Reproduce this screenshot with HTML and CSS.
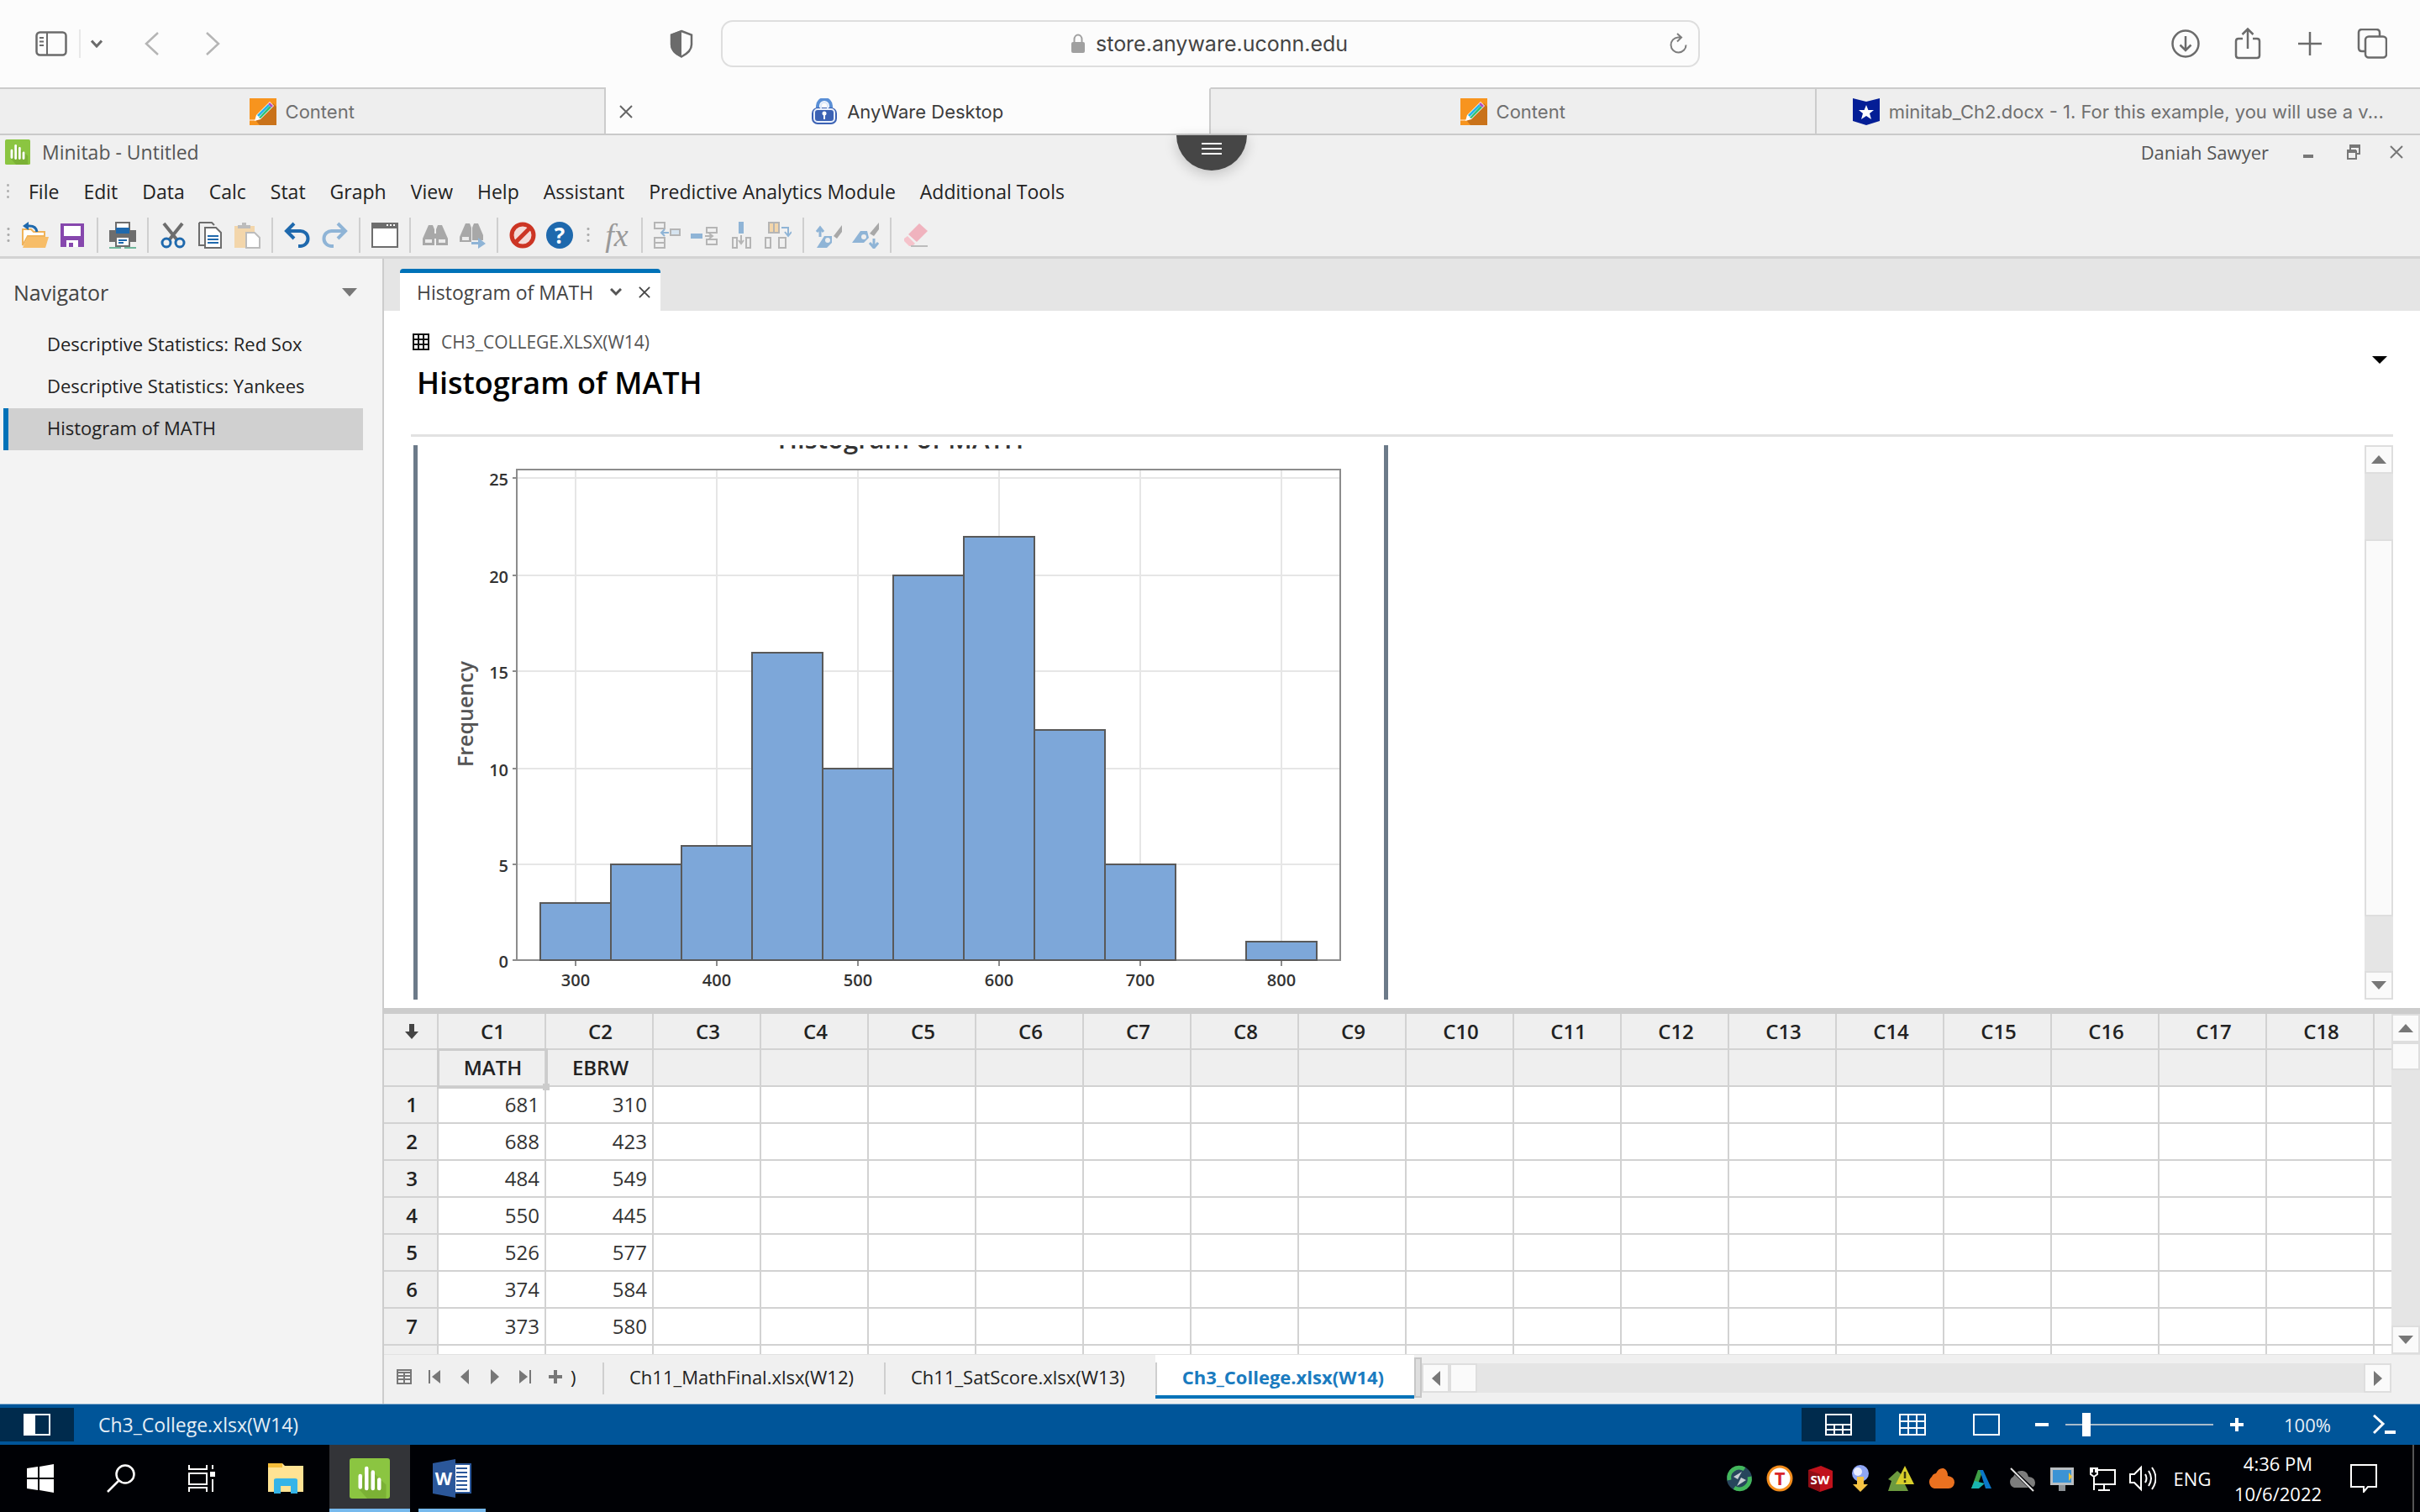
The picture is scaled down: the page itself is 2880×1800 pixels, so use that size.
FILE: index.html
```html
<!DOCTYPE html>
<html lang="en">
<head>
    <meta charset="UTF-8">
    <meta name="viewport" content="width=device-width, initial-scale=1.0">
    <title>AnyWare Desktop</title>
    <link rel="stylesheet" href="styles.css">
</head>
<body>

    <!-- Shared symbols -->
    <svg class="symbols" aria-hidden="true">
        <symbol id="pencil" viewBox="0 0 32 32">
            <rect width="32" height="32" fill="#f7941e"/>
            <path d="M28 6 32 10V32H12L7 26Z" fill="#c9721a"/>
            <path d="M0 26h7" stroke="#ffc27a" stroke-width="2"/>
            <path d="M6 27 8 20 24 4l5 5L13 25Z" fill="#fff"/>
            <path d="M9 20 22 7l2 2L11 22Z" fill="#25b5e8"/>
            <path d="M11 23 24 9l2 2L13 24Z" fill="#2fbf71"/>
            <path d="M22 7l2-2 4 4-2 2Z" fill="#b04ec2"/>
        </symbol>
        <symbol id="minitab" viewBox="0 0 32 32">
            <rect width="32" height="32" rx="2" fill="#8bc541"/>
            <path d="M14 7l15 14v11H14L7 24Z" fill="#7bb135"/>
            <path d="M8.500 14v9M13.500 8v16M18.500 11v13M23.500 17v7" stroke="#fff" stroke-width="3" stroke-linecap="round"/>
        </symbol>
        <symbol id="tri-up" viewBox="0 0 18 10"><path d="M0 10 9 0l9 10Z" fill="#777"/></symbol>
        <symbol id="tri-down" viewBox="0 0 18 10"><path d="M0 0h18L9 10Z" fill="#777"/></symbol>
        <symbol id="tri-left" viewBox="0 0 10 18"><path d="M10 0v18L0 9Z" fill="#777"/></symbol>
        <symbol id="tri-right" viewBox="0 0 10 18"><path d="M0 0v18l10-9Z" fill="#777"/></symbol>
        <symbol id="cross" viewBox="0 0 16 16"><path d="M1 1l14 14M15 1 1 15" stroke="currentColor" stroke-width="2"/></symbol>
    </svg>

    <!-- Browser toolbar -->
    <header class="browser-bar">
        <div class="bar-side">
            <button class="sidebar-btn" aria-label="Sidebar">
                <svg width="38" height="30" viewBox="0 0 38 30" fill="none" stroke="#6b6b6b" stroke-width="2.500"><rect x="1.500" y="1.500" width="35" height="27" rx="4"/><path d="M14 1v28M5 8h5M5 12.500h5M5 17h5" stroke-width="2"/></svg>
            </button>
            <button class="chevron-btn" aria-label="Tab groups">
                <svg width="14" height="10" viewBox="0 0 14 10" fill="none" stroke="#6b6b6b" stroke-width="3"><path d="M1 1.500 7 8l6-6.500"/></svg>
            </button>
            <button class="history-btn" aria-label="Back">
                <svg width="18" height="28" viewBox="0 0 18 28" fill="none" stroke="#b5b5b5" stroke-width="2.500"><path d="M16 1 2 14l14 13"/></svg>
            </button>
            <button class="history-btn" aria-label="Forward">
                <svg width="18" height="28" viewBox="0 0 18 28" fill="none" stroke="#b5b5b5" stroke-width="2.500"><path d="M2 1l14 13L2 27"/></svg>
            </button>
            <button class="shield-btn" aria-label="Privacy report">
                <svg width="28" height="34" viewBox="0 0 28 34"><path d="M14 2 26 6.500V18c0 7-5 11-12 14.500C7 29 2 25 2 18V6.500Z" fill="none" stroke="#6b6b6b" stroke-width="2.500"/><path d="M14 1 1 6v12c0 7 5 12 13 15.500Z" fill="#6b6b6b"/></svg>
            </button>
        </div>
        <form class="address">
            <svg width="18" height="24" viewBox="0 0 18 24"><path d="M4.500 11V7a4.500 5.500 0 0 1 9 0v4" fill="none" stroke="#a0a0a0" stroke-width="2"/><rect x="1" y="10" width="16" height="13" rx="2" fill="#a0a0a0"/></svg>
            <input class="address-input" type="text" aria-label="Address" value="store.anyware.uconn.edu">
            <button class="reload" type="button" aria-label="Reload">
                <svg width="24" height="26" viewBox="0 0 24 26" fill="none" stroke="#7d7d7d" stroke-width="2"><path d="M15 5.500H12a9 9 0 1 0 9.500 9M11 1l5 4.500-5 5"/></svg>
            </button>
        </form>
        <div class="bar-side bar-right">
            <button aria-label="Downloads">
                <svg width="36" height="36" viewBox="0 0 36 36" fill="none" stroke="#6b6b6b" stroke-width="2.500"><circle cx="18" cy="18" r="15.500"/><path d="M18 9v17M11.500 19.500 18 26l6.500-6.500"/></svg>
            </button>
            <button aria-label="Share">
                <svg width="36" height="40" viewBox="0 0 36 40" fill="none" stroke="#6b6b6b" stroke-width="2.500"><path d="M12 14H7q-3 0-3 3v17q0 3 3 3h22q3 0 3-3V17q0-3-3-3h-5M18 26V3M11.500 9 18 2.500 24.500 9"/></svg>
            </button>
            <button aria-label="New tab">
                <svg width="36" height="28" viewBox="0 0 36 28" stroke="#6b6b6b" stroke-width="2.500"><path d="M4 14h28M18 0v28"/></svg>
            </button>
            <button aria-label="Show all tabs">
                <svg width="36" height="36" viewBox="0 0 36 36" fill="none" stroke="#6b6b6b" stroke-width="2.500"><rect x="10" y="9.500" width="25" height="25" rx="4"/><path d="M10 27H6q-4 0-4-4V5q0-4 4-4h17q4 0 4 4v4"/></svg>
            </button>
        </div>
    </header>

    <!-- Browser tabs -->
    <nav class="browser-tabs">
        <a class="browser-tab" href="#"><svg class="favicon"><use href="#pencil"/></svg>Content</a>
        <a class="browser-tab active" href="#">
            <svg class="tab-close" width="16" height="16"><use href="#cross"/></svg>
            <svg class="favicon" viewBox="0 0 32 32"><path d="M8 14V9a8 8 0 0 1 16 0v5" fill="none" stroke="#5a8fd6" stroke-width="4"/><rect x="1" y="11" width="30" height="20" rx="7" fill="#3c62b4"/><rect x="4" y="13" width="24" height="15" rx="4" fill="none" stroke="#e8effb" stroke-width="2"/><circle cx="16" cy="18" r="2.500" fill="#fff"/><path d="M15 19h2v6h-2Z" fill="#fff"/><path d="M12 12V9a4 4 0 0 1 8 0v3" fill="none" stroke="#dce8fa" stroke-width="2"/></svg>AnyWare Desktop
        </a>
        <a class="browser-tab" href="#"><svg class="favicon"><use href="#pencil"/></svg>Content</a>
        <a class="browser-tab" href="#"><svg class="favicon" viewBox="0 0 32 32"><path d="M0 0l16 4 16-4v27l-16 5-16-5Z" fill="#041e96"/><path d="M16 8l2.400 6H25l-5 4 2 7-6-4-6 4 2-7-5-4h6.600Z" fill="#fff"/></svg>minitab_Ch2.docx - 1. For this example, you will use a v...</a>
    </nav>

    <!-- Remote desktop -->
    <main class="desktop">
        <button class="session-menu" aria-label="Session menu">
            <svg width="24" height="16" viewBox="0 0 24 16" stroke="#fff" stroke-width="2"><path d="M0 1h24M0 7h24M0 13h24"/></svg>
        </button>

        <div class="title-bar">
            <svg width="30" height="30"><use href="#minitab"/></svg>
            <h1 class="app-title">Minitab - Untitled</h1>
            <span class="user-name">Daniah Sawyer</span>
            <button class="win-btn" aria-label="Minimize"><svg width="14" height="16" viewBox="0 0 14 16"><path d="M1 11h12v4H1Z" fill="#777"/></svg></button>
            <button class="win-btn" aria-label="Restore"><svg width="18" height="20" viewBox="0 0 18 20" fill="none" stroke="#777" stroke-width="2"><path d="M5 7V2h11v10h-4"/><path d="M5 3h11M1 9h11" stroke-width="4"/><path d="M2 8v10h10V8"/></svg></button>
            <button class="win-btn" aria-label="Close"><svg width="16" height="16"><use href="#cross"/></svg></button>
        </div>

        <nav class="menu-bar">
            <span class="grip"></span>
            <button>File</button>
            <button>Edit</button>
            <button>Data</button>
            <button>Calc</button>
            <button>Stat</button>
            <button>Graph</button>
            <button>View</button>
            <button>Help</button>
            <button>Assistant</button>
            <button>Predictive Analytics Module</button>
            <button>Additional Tools</button>
        </nav>

        <div class="tool-bar">
            <span class="grip"></span>
            <button aria-label="Open"><svg viewBox="0 0 32 32"><path d="M1 9h10l3 3h13v5H7L1 28Z" fill="#fff" stroke="#f0b35a" stroke-width="2"/><path d="M7 18h25l-4 13H1Z" fill="#f7bd68"/><path d="M4 5h5q8 0 9 7" fill="none" stroke="#1f69ad" stroke-width="3"/><path d="M8 0v10L1 5Z" fill="#1f69ad"/></svg></button>
            <button aria-label="Save"><svg viewBox="0 0 32 32"><path d="M2 2h28v28H2Z" fill="#8647ad"/><path d="M6 5h20v12H6ZM9 22h14v8H9Z" fill="#fff"/><path d="M12 25h5v5h-5Z" fill="#8647ad"/></svg></button>
            <span class="sep"></span>
            <button aria-label="Print"><svg viewBox="0 0 32 32"><path d="M8 1h16v9H8Z" fill="#fff" stroke="#6d6d6d" stroke-width="2"/><path d="M0 10h32v14H0Z" fill="#6d6d6d"/><path d="M8 7h16v7H8Z" fill="#1f69ad"/><path d="M8 18h16v11H8Z" fill="#fff" stroke="#6d6d6d" stroke-width="2"/><path d="M11 22h10M11 25h6" stroke="#1f69ad" stroke-width="2"/><path d="M0 31h32" stroke="#6fb59a" stroke-width="2" stroke-dasharray="14 4"/></svg></button>
            <span class="sep"></span>
            <button aria-label="Cut"><svg viewBox="0 0 32 32"><path d="M5 2 21 22M27 2 11 22" stroke="#6d6d6d" stroke-width="4"/><circle cx="8" cy="25" r="5" fill="none" stroke="#1f69ad" stroke-width="3"/><circle cx="24" cy="25" r="5" fill="none" stroke="#1f69ad" stroke-width="3"/></svg></button>
            <button aria-label="Copy"><svg viewBox="0 0 32 32" fill="none" stroke="#6d6d6d" stroke-width="2"><path d="M3 1h15l3 3M3 1v27h6"/><path d="M10 7h13l6 6v18H10Z" fill="#fff"/><path d="M13 17h13M13 21h13M13 25h13" stroke="#1f69ad"/></svg></button>
            <button aria-label="Paste"><svg viewBox="0 0 32 32"><path d="M1 5h24v26H1Z" fill="#f3d6ab"/><path d="M5 8V4h5V1h5v3h5v4Z" fill="#bcbcbc"/><path d="M15 13h10l6 6v12H15Z" fill="#fff" stroke="#bcbcbc" stroke-width="2"/></svg></button>
            <span class="sep"></span>
            <button aria-label="Undo"><svg viewBox="0 0 32 32" fill="none" stroke="#1f69ad" stroke-width="4"><path d="M3 11h16a9 9 0 0 1 1 18h-3M12 2 3 11l9 9"/></svg></button>
            <button aria-label="Redo"><svg viewBox="0 0 32 32" fill="none" stroke="#8fb4d6" stroke-width="4"><path d="M29 11H13a9 9 0 0 0-1 18h3M20 2l9 9-9 9"/></svg></button>
            <span class="sep"></span>
            <button aria-label="Window"><svg viewBox="0 0 32 32"><path d="M1 2h30v28H1Z" fill="#fff" stroke="#6d6d6d" stroke-width="2"/><path d="M1 2h30v6H1Z" fill="#6d6d6d"/><path d="M18 4h10" stroke="#fff" stroke-width="2" stroke-dasharray="2 2"/></svg></button>
            <span class="sep"></span>
            <button aria-label="Find"><svg viewBox="0 0 32 32" fill="#a8a8a8"><path d="M8 4h5l2 5v19H1v-8ZM19 4h5l7 16v8H17V9Z"/><path d="M4 21h8v4H4ZM20 21h8v4h-8Z" fill="#ececec"/><path d="M13 14h6v6h-6Z"/></svg></button>
            <button aria-label="Find next"><svg viewBox="0 0 32 32" fill="#a8a8a8"><path d="M8 2h5l2 5v17H1v-6ZM18 2h5l6 14v6H16V7Z"/><path d="M4 18h8v4H4Z" fill="#ececec"/><path d="M15 24h8v-5l9 7-9 6v-5h-8Z" fill="#8fb4d6"/></svg></button>
            <span class="sep"></span>
            <button aria-label="Cancel"><svg viewBox="0 0 32 32" fill="none" stroke="#cc3524" stroke-width="5"><circle cx="16" cy="16" r="13" fill="#f3dcd9"/><path d="M25 7 7 25"/></svg></button>
            <button class="help-btn" aria-label="Help"><span class="help-mark">?</span></button>
            <span class="grip grip-wide"></span>
            <button class="fx" aria-label="Formula">fx</button>
            <span class="sep"></span>
            <button aria-label="Insert cells"><svg viewBox="0 0 32 32" fill="none" stroke="#b5b5b5" stroke-width="2"><path d="M1 1h12v7H1ZM1 19h12v12H1ZM1 25h12"/><path d="M20 9h11v7H20Z" fill="#d6e4f0"/><path d="M18 13H9M13 9l-4 4 4 4" stroke="#8fb4d6"/></svg></button>
            <button aria-label="Insert rows"><svg viewBox="0 0 32 32" fill="none" stroke="#b5b5b5" stroke-width="2"><path d="M19 7h12v6H19ZM19 21h12v6H19ZM17 17h9M22 14l4 3-4 3"/><path d="M0 14h14v6H0Z" fill="#8fb4d6" stroke="none"/></svg></button>
            <button aria-label="Insert columns"><svg viewBox="0 0 32 32" fill="none" stroke="#b5b5b5" stroke-width="2"><path d="M6 19h5v12H6ZM22 19h5v12h-5ZM16 16v9M13 22l3 4 3-4"/><path d="M13 0h6v14h-6Z" fill="#8fb4d6" stroke="none"/></svg></button>
            <button aria-label="Move columns"><svg viewBox="0 0 32 32" fill="none" stroke="#b5b5b5" stroke-width="2"><path d="M5 1h12v12H5Z" fill="#f3d6ab"/><path d="M11 1v12M1 19h6v12H1ZM17 19h8v12h-8Z"/><path d="M20 7h8v9M24 12l4 5 4-5" stroke="#8fb4d6"/></svg></button>
            <span class="sep"></span>
            <button aria-label="Previous brush"><svg viewBox="0 0 32 32"><path d="M32 4v8l-6 8-4-3Z" fill="#a8a8a8"/><path d="M6 7v11M2 12l4-5 4 5" fill="none" stroke="#8fb4d6" stroke-width="3"/><path d="M2 31 11 17h9v8l-6 6Z" fill="#8fb4d6"/><circle cx="15" cy="22" r="3" fill="#efefef"/></svg></button>
            <button aria-label="Next brush"><svg viewBox="0 0 32 32"><path d="M32 1v8l-6 8-5-3Z" fill="#a8a8a8"/><path d="M0 25 10 11h8l2 8-6 6Z" fill="#8fb4d6"/><circle cx="14" cy="18" r="3" fill="#efefef"/><path d="M26 20v10M21 25l5 6 5-6" fill="none" stroke="#8fb4d6" stroke-width="3"/></svg></button>
            <span class="sep"></span>
            <button aria-label="Erase"><svg viewBox="0 0 32 32"><path d="M20 2 30 11 17 24 7 15Z" fill="#f0b3be"/><path d="M6 17l9 9-3 3H8l-6-6v-3Z" fill="#f5c3cb"/><path d="M10 29h20" stroke="#bcbcbc" stroke-width="2"/></svg></button>
        </div>

        <div class="workspace">
            <!-- Navigator -->
            <aside class="navigator">
                <div class="nav-head">
                    <h2>Navigator</h2>
                    <button aria-label="Navigator options"><svg width="18" height="10"><use href="#tri-down"/></svg></button>
                </div>
                <a class="nav-item" href="#">Descriptive Statistics: Red Sox</a>
                <a class="nav-item" href="#">Descriptive Statistics: Yankees</a>
                <a class="nav-item selected" href="#">Histogram of MATH</a>
            </aside>

            <div class="panes">
                <div class="output-tabs">
                    <div class="output-tab">
                        <span class="output-name">Histogram of MATH</span>
                        <button aria-label="Tab options"><svg width="14" height="10" viewBox="0 0 14 10"><path d="M1 1l6 6 6-6" fill="none" stroke="#555" stroke-width="3"/></svg></button>
                        <button aria-label="Close tab"><svg width="14" height="14"><use href="#cross"/></svg></button>
                    </div>
                </div>

                <!-- Output pane -->
                <section class="output">
                    <div class="output-head">
                        <div>
                            <div class="source">
                                <svg width="20" height="20" viewBox="0 0 20 20" fill="none" stroke="#111" stroke-width="2"><path d="M1 1h18v18H1ZM7 1v18M13 1v18M1 7h18M1 13h18"/></svg>
                                CH3_COLLEGE.XLSX(W14)
                            </div>
                            <h2 class="output-title">Histogram of MATH</h2>
                        </div>
                        <button class="output-menu" aria-label="Output options"><svg width="18" height="9" viewBox="0 0 18 9"><path d="M0 0h18L9 9Z"/></svg></button>
                    </div>
                    <div class="output-body">
                        <div class="chart">
                            <svg class="plot" width="1150" height="660" viewBox="5 0 1150 660">
                                <text class="plot-title" x="580" y="4">Histogram of MATH</text>
                                <path class="gridline" d="M193 29v584M361 29v584M529 29v584M697 29v584M865 29v584M1033 29v584M123 39h980M123 155h980M123 269h980M123 385h980M123 499h980"/>
                                <path class="frame" d="M123 29h980v584H123ZM118 39h5M118 155h5M118 269h5M118 385h5M118 499h5M118 613h5M193 613v7M361 613v7M529 613v7M697 613v7M865 613v7M1033 613v7"/>
                                <g class="bar">
                                    <rect x="151" y="545" width="84" height="68"/>
                                    <rect x="235" y="499" width="84" height="114"/>
                                    <rect x="319" y="477" width="84" height="136"/>
                                    <rect x="403" y="247" width="84" height="366"/>
                                    <rect x="487" y="385" width="84" height="228"/>
                                    <rect x="571" y="155" width="84" height="458"/>
                                    <rect x="655" y="109" width="84" height="504"/>
                                    <rect x="739" y="339" width="84" height="274"/>
                                    <rect x="823" y="499" width="84" height="114"/>
                                    <rect x="991" y="591" width="84" height="22"/>
                                </g>
                                <g class="tick y-tick">
                                    <text x="113" y="48">25</text>
                                    <text x="113" y="164">20</text>
                                    <text x="113" y="278">15</text>
                                    <text x="113" y="394">10</text>
                                    <text x="113" y="508">5</text>
                                    <text x="113" y="622">0</text>
                                </g>
                                <g class="tick x-tick">
                                    <text x="193" y="644">300</text>
                                    <text x="361" y="644">400</text>
                                    <text x="529" y="644">500</text>
                                    <text x="697" y="644">600</text>
                                    <text x="865" y="644">700</text>
                                    <text x="1033" y="644">800</text>
                                </g>
                                <text class="axis-title" transform="translate(71 320) rotate(-90)">Frequency</text>
                            </svg>
                        </div>
                        <div class="scroll-v">
                            <button aria-label="Scroll up"><svg width="18" height="10"><use href="#tri-up"/></svg></button>
                            <span class="thumb output-thumb"></span>
                            <button aria-label="Scroll down"><svg width="18" height="10"><use href="#tri-down"/></svg></button>
                        </div>
                    </div>
                </section>

                <!-- Worksheet -->
                <section class="worksheet">
                    <div class="sheet-view">
                        <table class="sheet" id="sheet"></table>
                        <span class="cell-cursor"></span>
                    </div>
                    <div class="scroll-v">
                        <button aria-label="Scroll up"><svg width="18" height="10"><use href="#tri-up"/></svg></button>
                        <span class="thumb sheet-thumb"></span>
                        <button aria-label="Scroll down"><svg width="18" height="10"><use href="#tri-down"/></svg></button>
                    </div>
                </section>

                <div class="sheet-bar">
                    <div class="sheet-nav">
                        <button aria-label="Worksheets"><svg width="18" height="18" viewBox="0 0 18 18" fill="none" stroke="#777" stroke-width="2"><path d="M1 1h16v16H1ZM1 4h16M1 8h16M1 12h16M9 3v14"/></svg></button>
                        <button aria-label="First"><svg width="14" height="16" viewBox="0 0 14 16" fill="#777"><path d="M0 0h2v16H0ZM14 0v16L4 8Z"/></svg></button>
                        <button aria-label="Previous"><svg width="10" height="18"><use href="#tri-left"/></svg></button>
                        <button aria-label="Next"><svg width="10" height="18"><use href="#tri-right"/></svg></button>
                        <button aria-label="Last"><svg width="14" height="16" viewBox="0 0 14 16" fill="#777"><path d="M12 0h2v16h-2ZM0 0v16l10-8Z"/></svg></button>
                        <button aria-label="Add worksheet"><svg width="16" height="16" viewBox="0 0 16 16" stroke="#777" stroke-width="4"><path d="M0 8h16M8 0v16"/></svg></button>
                        <span class="paren">)</span>
                    </div>
                    <button class="sheet-tab">Ch11_MathFinal.xlsx(W12)</button>
                    <button class="sheet-tab">Ch11_SatScore.xlsx(W13)</button>
                    <button class="sheet-tab active">Ch3_College.xlsx(W14)</button>
                    <span class="sheet-split"></span>
                    <div class="scroll-h">
                        <button aria-label="Scroll left"><svg width="10" height="18"><use href="#tri-left"/></svg></button>
                        <span class="thumb h-thumb"></span>
                        <button aria-label="Scroll right"><svg width="10" height="18"><use href="#tri-right"/></svg></button>
                    </div>
                </div>
            </div>
        </div>

        <div class="status-bar">
            <button class="status-btn pressed" aria-label="Toggle navigator"><svg width="32" height="26" viewBox="0 0 32 26"><path d="M1 1h30v24H1Z" fill="none" stroke="#fff" stroke-width="2"/><path d="M1 1h13v24H1Z" fill="#fff"/></svg></button>
            <span class="status-file">Ch3_College.xlsx(W14)</span>
            <button class="status-btn pressed" aria-label="Split view"><svg width="32" height="26" viewBox="0 0 32 26" fill="none" stroke="#fff" stroke-width="2"><path d="M1 1h30v24H1ZM1 13h30M1 19h30M11 13v12M21 13v12"/></svg></button>
            <button class="status-btn" aria-label="Data view"><svg width="32" height="26" viewBox="0 0 32 26" fill="none" stroke="#fff" stroke-width="2"><path d="M1 1h30v24H1ZM1 9h30M1 17h30M11 1v24M21 1v24"/></svg></button>
            <button class="status-btn" aria-label="Output view"><svg width="32" height="26" viewBox="0 0 32 26" fill="none" stroke="#fff" stroke-width="2"><path d="M1 1h30v24H1Z"/></svg></button>
            <button class="zoom-btn" aria-label="Zoom out"><svg width="16" height="16" viewBox="0 0 16 16" stroke="#fff" stroke-width="4"><path d="M0 8h16"/></svg></button>
            <input class="zoom-range" type="range" min="0" max="100" value="12" aria-label="Zoom">
            <button class="zoom-btn" aria-label="Zoom in"><svg width="16" height="16" viewBox="0 0 16 16" stroke="#fff" stroke-width="4"><path d="M0 8h16M8 0v16"/></svg></button>
            <span class="zoom-value">100%</span>
            <button class="prompt-btn" aria-label="Command line"><svg width="28" height="24" viewBox="0 0 28 24" fill="none" stroke="#fff"><path d="M1 1l11 10L1 22" stroke-width="3"/><path d="M14 21h13" stroke-width="4"/></svg></button>
        </div>
    </main>

    <!-- Taskbar -->
    <footer class="taskbar">
        <button class="task-btn" aria-label="Start"><svg width="32" height="34" viewBox="0 0 32 34" fill="#fff"><path d="M0 5l13-2v13H0ZM15 3l17-3v16H15ZM0 18h13v13L0 29ZM15 18h17v16l-17-3Z"/></svg></button>
        <button class="task-btn" aria-label="Search"><svg width="34" height="34" viewBox="0 0 34 34" fill="none" stroke="#fff" stroke-width="2.500"><circle cx="22" cy="12" r="10.500"/><path d="M14 20 1 33"/></svg></button>
        <button class="task-btn" aria-label="Task view"><svg width="34" height="32" viewBox="0 0 34 32" fill="none" stroke="#fff" stroke-width="2"><path d="M2 0v5h21V0M2 10h21v13H2ZM2 32v-5h21v5M30 0v5M30 17v15"/><path d="M27 8h6v6h-6Z" fill="#fff" stroke="none"/></svg></button>
        <button class="task-btn app" aria-label="File Explorer"><svg width="44" height="36" viewBox="0 0 44 36"><path d="M1 0h17l3 3h22v31H1Z" fill="#ffe394"/><path d="M1 0h17v5H1Z" fill="#f5bd3a"/><path d="M8 36V20q0-2 3-2h22q3 0 3 2v16h-8v-9H16v9Z" fill="#35b4e8"/></svg></button>
        <button class="task-btn app current" aria-label="Minitab"><svg width="48" height="48"><use href="#minitab"/></svg></button>
        <button class="task-btn app running" aria-label="Word"><svg width="46" height="46" viewBox="0 0 46 46"><path d="M22 6h23v34H22Z" fill="#fff" stroke="#2b579a" stroke-width="2"/><path d="M28 11h13M28 16h13M28 21h13M28 26h13M28 31h13M28 36h13" stroke="#2b579a" stroke-width="2"/><path d="M0 5 27 0v46L0 41Z" fill="#2b579a"/><text class="icon-letter" x="13" y="31" font-size="21">W</text></svg></button>

        <div class="tray">
            <svg viewBox="0 0 32 32"><circle cx="16" cy="16" r="15" fill="#27455c"/><path d="M4 18a12 12 0 0 1 18-13M28 14a12 12 0 0 1-18 13" fill="none" stroke="#43b75c" stroke-width="5"/><path d="M19 8 9 14l5 3ZM13 25l11-7-6-3Z" fill="#c7ced3"/></svg>
            <svg viewBox="0 0 32 32"><circle cx="16" cy="16" r="14" fill="#fff" stroke="#f28c1c" stroke-width="3"/><text class="icon-letter red" x="16" y="24" font-size="22">T</text></svg>
            <svg viewBox="0 0 32 32"><path d="M2 6 17 1l14 6v20l-15 5-14-6Z" fill="#c1121c"/><path d="M2 6l14 5v21L2 26Z" fill="#8f0d15"/><text class="icon-letter" x="16" y="23" font-size="15">SW</text></svg>
            <svg viewBox="0 0 32 32"><circle cx="16" cy="10" r="10" fill="#8fa6f5"/><circle cx="13" cy="8" r="5" fill="#e9edff"/><path d="M12 14h8v9h5l-9 9-9-9h5Z" fill="#f6c445"/></svg>
            <svg viewBox="0 0 32 32"><path d="M1 31l4-12-4-2L12 7l12 11-5 1 6 12Z" fill="#6c9a3f"/><path d="M21 1l11 22H10Z" fill="#d8cf2b"/><path d="M21 8v8M21 18v3" stroke="#3d3a10" stroke-width="2.500"/></svg>
            <svg viewBox="0 0 32 32"><path d="M8 28a8 8 0 0 1-3-14 6 6 0 0 1 5-4q3-7 9-6 5 2 5 9 8 1 8 8-1 7-7 7Z" fill="#ea7120"/></svg>
            <svg viewBox="0 0 32 32"><path d="M4 28 12 6h6L10 28Z" fill="#3f9f47"/><path d="M4 28l4-9 12 3-7 6Z" fill="#19b5b0"/><path d="M14 6h4l10 22h-7Z" fill="#0a77c9"/></svg>
            <svg viewBox="0 0 32 32"><path d="M7 27a7 7 0 0 1-1-13q3-8 11-7 6 1 7 7 8 1 8 7 0 6-6 6Z" fill="#7d7d7d"/><path d="M4 5l26 25" stroke="#000105" stroke-width="4"/><path d="M3 4l27 27" stroke="#e5e5e5" stroke-width="2"/></svg>
            <svg viewBox="0 0 32 32"><path d="M2 3h28v21H2Z" fill="#b9bec2"/><path d="M5 6h22v15H5Z" fill="#3c93d4"/><path d="M12 24h8v7h-8Z" fill="#8c9297"/><path d="M24 9l4 5-4 5Z" fill="#f0c63c"/></svg>
            <svg viewBox="0 0 32 32" fill="none" stroke="#fff" stroke-width="2"><path d="M11 6h20v17H6v-9M18 23v7M11 30h14M1 4h9v7l-4 3-4-3V4M4 4v5M8 4v5M6 14v16"/></svg>
            <svg viewBox="0 0 32 32" fill="none" stroke="#fff" stroke-width="2"><path d="M1 11h5l8-8v26l-8-8H1ZM19 11q3 5 0 10M23 7q6 9 0 18M27 3q9 13 0 26"/></svg>
        </div>
        <span class="lang">ENG</span>
        <div class="clock"><span>4:36 PM</span><span>10/6/2022</span></div>
        <button class="notify" aria-label="Notifications"><svg width="32" height="34" viewBox="0 0 32 34" fill="none" stroke="#fff" stroke-width="2"><path d="M1 1h30v26H21l-5 6v-6H1Z"/></svg></button>
        <span class="show-desktop"></span>
    </footer>

    <script src="script.js"></script>
</body>
</html>
```

FILE: styles.css
```css
/* General Styling */
* {
    box-sizing: border-box;
    margin: 0;
    padding: 0;
}

body {
    display: flex;
    flex-direction: column;
    height: 100vh;
    overflow: hidden;
    font-family: "Open Sans", "Noto Sans", sans-serif;
    font-size: 22px;
    line-height: 30px;
    color: #222;
    background: #f0f0f0;
}

button,
input {
    font: inherit;
    color: inherit;
    background: none;
    border: none;
    outline: none;
}

button {
    display: flex;
    align-items: center;
    justify-content: center;
    flex: none;
    cursor: pointer;
}

a {
    color: inherit;
    text-decoration: none;
}

svg {
    display: block;
    flex: none;
}

.symbols {
    position: absolute;
    width: 0;
    height: 0;
}

.icon-letter {
    font-weight: 700;
    text-anchor: middle;
    fill: #fff;
}

.icon-letter.red {
    fill: #d8262c;
}

/* Browser toolbar */
.browser-bar {
    display: flex;
    align-items: center;
    height: 104px;
    flex: none;
    background: #fcfcfc;
    font-family: Inter, sans-serif;
}

.bar-side {
    display: flex;
    align-items: center;
    flex: 1;
}

.sidebar-btn {
    height: 34px;
    padding: 0 14px 0 42px;
    border-right: 2px solid #e8e8e8;
}

.chevron-btn {
    padding: 0 23px 0 12px;
}

.history-btn {
    width: 72px;
}

.shield-btn {
    margin-left: auto;
    padding-right: 33px;
}

.address {
    display: flex;
    align-items: center;
    justify-content: center;
    gap: 12px;
    position: relative;
    width: 1165px;
    height: 56px;
    padding-left: 8px;
    border: 2px solid #dedede;
    border-radius: 14px;
}

.address-input {
    width: 310px;
    font-size: 25px;
    line-height: 32px;
    color: #444;
}

.reload {
    position: absolute;
    right: 12px;
}

.bar-right {
    justify-content: flex-end;
    gap: 38px;
}

.bar-right button:last-child {
    margin-right: 39px;
}

/* Browser tabs */
.browser-tabs {
    display: flex;
    height: 57px;
    flex: none;
    border-bottom: 2px solid #cacaca;
    font-family: Inter, sans-serif;
}

.browser-tab {
    display: flex;
    align-items: center;
    justify-content: center;
    gap: 11px;
    flex: 1;
    position: relative;
    color: #707070;
    background: #eeeeee;
    border-top: 2px solid #cccccc;
    border-right: 2px solid #cccccc;
}

.browser-tab.active {
    color: #3c3c3c;
    background: #fcfcfc;
    border-top-color: #fcfcfc;
}

.browser-tab:last-child {
    border-right: none;
}

.favicon {
    width: 32px;
    height: 32px;
}

.tab-close {
    position: absolute;
    left: 16px;
    color: #666;
}

/* Remote desktop */
.desktop {
    display: flex;
    flex-direction: column;
    flex: 1;
    min-height: 0;
    position: relative;
}

.session-menu {
    position: absolute;
    top: 0;
    left: 50%;
    width: 84px;
    height: 42px;
    margin-left: -40px;
    padding-bottom: 8px;
    background: #464646;
    border-radius: 0 0 42px 42px;
    box-shadow: 0 4px 16px rgba(0, 0, 0, 0.2);
}

.title-bar {
    display: flex;
    align-items: center;
    height: 40px;
    flex: none;
    padding: 0 4px 0 6px;
    font-size: 23px;
    color: #555;
}

.app-title {
    flex: 1;
    margin-left: 14px;
    font-size: 23px;
    font-weight: 400;
}

.user-name {
    margin-right: 20px;
    font-size: 22px;
}

.win-btn {
    width: 54px;
    color: #777;
}

.win-btn:last-child {
    width: 48px;
}

/* Menu bar */
.menu-bar {
    display: flex;
    align-items: center;
    gap: 29px;
    height: 54px;
    flex: none;
    padding-left: 8px;
    font-size: 23px;
}

.menu-bar .grip {
    width: 3px;
    margin-right: -6px;
}

.grip {
    width: 20px;
    height: 22px;
    background: radial-gradient(circle, #aaa 1px, transparent 2px) center top / 8px 7px repeat-y;
}

/* Tool bar */
.tool-bar {
    display: flex;
    align-items: center;
    height: 53px;
    flex: none;
    border-bottom: 3px solid #d3d3d3;
}

.tool-bar button {
    width: 44px;
    height: 44px;
}

.tool-bar svg {
    width: 32px;
    height: 32px;
}

.help-mark {
    width: 32px;
    height: 32px;
    font-size: 26px;
    font-weight: 700;
    line-height: 32px;
    text-align: center;
    color: #fff;
    background: #1f69ad;
    border-radius: 50%;
}

.grip-wide {
    width: 24px;
}

.sep {
    width: 2px;
    height: 42px;
    margin: 0 7px;
    background: #cfcfcf;
}

.tool-bar .fx {
    font-family: "Liberation Serif", serif;
    font-size: 38px;
    font-style: italic;
    color: #999;
}

/* Workspace */
.workspace {
    display: flex;
    flex: 1;
    min-height: 0;
}

.navigator {
    width: 457px;
    flex: none;
    background: #f3f3f3;
    border-right: 2px solid #cccccc;
}

.nav-head {
    display: flex;
    align-items: center;
    justify-content: space-between;
    height: 78px;
    padding: 2px 30px 0 16px;
    color: #444;
}

.nav-head h2 {
    font-size: 25px;
    font-weight: 400;
}

.nav-item {
    display: flex;
    align-items: center;
    height: 50px;
    margin: 0 23px 0 4px;
    padding: 0 0 4px 46px;
    border-left: 6px solid transparent;
}

.nav-item.selected {
    background: #d0d0d0;
    border-left-color: #0072b8;
}

.panes {
    display: flex;
    flex-direction: column;
    flex: 1;
    min-width: 0;
}

/* Output tabs */
.output-tabs {
    display: flex;
    align-items: flex-end;
    height: 62px;
    flex: none;
    padding-left: 19px;
    background: #e5e5e5;
}

.output-tab {
    display: flex;
    align-items: center;
    gap: 20px;
    height: 50px;
    padding: 0 12px 0 20px;
    font-size: 23px;
    color: #444;
    background: #fff;
    border-top: 5px solid #0072b8;
    border-radius: 4px 4px 0 0;
}

/* Output pane */
.output {
    display: flex;
    flex-direction: column;
    flex: 1;
    min-height: 0;
    padding: 0 32px 10px;
    background: #fff;
}

.output-head {
    display: flex;
    align-items: center;
    justify-content: space-between;
    height: 150px;
    flex: none;
    padding: 0 7px 10px 2px;
    border-bottom: 3px solid #e2e2e2;
}

.output-menu {
    margin-bottom: 21px;
}

.source {
    display: flex;
    align-items: center;
    gap: 14px;
    height: 34px;
    font-size: 21px;
    color: #555;
}

.output-title {
    margin-left: 5px;
    font-size: 36px;
    font-weight: 600;
    line-height: 64px;
    color: #000;
}

.output-body {
    display: flex;
    justify-content: space-between;
    flex: 1;
    min-height: 0;
    margin-top: 10px;
}

.chart {
    overflow: hidden;
    margin-left: 3px;
    border: solid #6c7a89;
    border-width: 0 5px;
}

.plot text {
    fill: #333;
}

.plot-title {
    font-size: 31px;
    font-weight: 600;
    text-anchor: middle;
}

.plot .gridline {
    fill: none;
    stroke: #e6e6e6;
    stroke-width: 2;
}

.plot .frame {
    fill: none;
    stroke: #8c8c8c;
    stroke-width: 2;
}

.bar rect {
    fill: #7da7d9;
    stroke: #595959;
    stroke-width: 2;
}

.tick {
    font-size: 20px;
    font-weight: 600;
}

.y-tick {
    text-anchor: end;
}

.x-tick {
    text-anchor: middle;
}

.plot .axis-title {
    font-size: 25px;
    font-weight: 600;
    text-anchor: middle;
    fill: #555;
}

/* Scroll bars */
.scroll-v {
    display: flex;
    flex-direction: column;
    width: 34px;
    flex: none;
    background: #e5e5e5;
}

.scroll-v button,
.scroll-h button,
.thumb {
    background: #fafafa;
    border: 2px solid #dedede;
}

.scroll-v button {
    height: 34px;
}

.scroll-v button:last-child {
    margin-top: auto;
}

.output-thumb {
    height: 68%;
    margin-top: 78px;
}

.sheet-thumb {
    height: 33px;
}

/* Worksheet */
.worksheet {
    display: flex;
    height: 413px;
    flex: none;
    border-top: 7px solid #cccccc;
    border-bottom: 1px solid #e2e2e2;
}

.sheet-view {
    flex: 1;
    min-width: 0;
    overflow: hidden;
    position: relative;
    background: #fff;
}

.sheet {
    width: 2497px;
    table-layout: fixed;
    border-collapse: separate;
    border-spacing: 0;
    font-size: 24px;
}

.sheet th,
.sheet td {
    width: 128px;
    height: 44px;
    border: solid #d2d2d2;
    border-width: 0 2px 2px 0;
}

.sheet th {
    padding-left: 3px;
    font-weight: 600;
    background: #efefef;
    color: #222;
}

.sheet tr:first-child th {
    height: 43px;
}

.sheet th:first-child {
    width: 65px;
}

.sheet th svg {
    margin: 0 auto;
}

.sheet td {
    padding-right: 6px;
    line-height: 40px;
    text-align: right;
    color: #333;
}

/* Selected cell outline with its fill handle */
.cell-cursor {
    position: absolute;
    top: 41px;
    left: 63px;
    width: 132px;
    height: 48px;
    border: 3px solid #cccccc;
}

.cell-cursor::after {
    content: "";
    position: absolute;
    right: -5px;
    bottom: -5px;
    width: 8px;
    height: 8px;
    background: #cccccc;
}

/* Sheet tabs */
.sheet-bar {
    display: flex;
    height: 58px;
    flex: none;
    padding-right: 34px;
    background: #f0f0f0;
}

.sheet-nav {
    display: flex;
    align-items: center;
    width: 260px;
    height: 52px;
    padding-left: 6px;
}

.sheet-nav button {
    width: 36px;
}

.sheet-tab {
    height: 52px;
    padding: 0 36px 0 32px;
    position: relative;
}

.sheet-tab::before {
    content: "";
    position: absolute;
    left: 0;
    top: 9px;
    height: 38px;
    border-left: 2px solid #cfcfcf;
}

.sheet-tab.active {
    padding-top: 4px;
    font-weight: 700;
    color: #1a7bbf;
    background: #fff;
    border-bottom: 4px solid #0072b8;
}

.sheet-split {
    width: 9px;
    height: 48px;
    margin-top: 3px;
    background: #dedede;
    border: 2px solid #c6c6c6;
}

.scroll-h {
    display: flex;
    flex: 1;
    height: 35px;
    margin-top: 10px;
    background: #e5e5e5;
}

.scroll-h button,
.h-thumb {
    width: 33px;
}

.scroll-h button:last-child {
    margin-left: auto;
}

/* Status bar */
.status-bar {
    display: flex;
    align-items: center;
    height: 49px;
    flex: none;
    color: #e6eef5;
    background: #005599;
    border-top: 1px solid #8db3d1;
}

.status-btn {
    width: 88px;
    height: 40px;
}

.status-btn.pressed {
    background: #002b4d;
}

.status-file {
    flex: 1;
    margin-left: 29px;
    font-size: 23px;
}

.zoom-btn {
    width: 16px;
    margin: 0 20px;
}

.status-btn + .zoom-btn {
    margin-left: 14px;
}

.zoom-range {
    width: 176px;
    height: 30px;
    appearance: none;
}

.zoom-range::-webkit-slider-runnable-track {
    height: 2px;
    background: #a9bccb;
}

.zoom-range::-webkit-slider-thumb {
    appearance: none;
    width: 10px;
    height: 28px;
    margin-top: -13px;
    background: #fff;
}

.zoom-value {
    width: 84px;
    margin-left: 14px;
    text-align: center;
}

.prompt-btn {
    margin: 0 28px 0 36px;
}

/* Taskbar */
.taskbar {
    display: flex;
    align-items: center;
    height: 80px;
    flex: none;
    color: #fff;
    background: #000105;
}

.task-btn {
    width: 96px;
    height: 80px;
}

.task-btn.app {
    margin-left: 4px;
    border-bottom: 4px solid transparent;
    border-top: 4px solid transparent;
}

.task-btn.current {
    background: #333438;
    border-top-color: #333438;
    border-bottom-color: #76b9ed;
}

.task-btn.app.running {
    width: 80px;
    margin-left: 10px;
    border-bottom-color: #76b9ed;
}

.tray {
    display: flex;
    gap: 16px;
    margin-left: auto;
}

.tray svg {
    width: 32px;
    height: 32px;
}

.lang {
    width: 48px;
    margin-left: 19px;
    text-align: center;
}

.clock {
    display: flex;
    flex-direction: column;
    gap: 6px;
    width: 116px;
    margin-left: 20px;
    text-align: center;
}

.notify {
    margin: 0 42px 0 28px;
}

.show-desktop {
    width: 9px;
    height: 80px;
    border-left: 2px solid #555;
}
```

FILE: script.js
```js
// Worksheet data: column names and the visible rows
const columns = ["MATH", "EBRW"];
const rows = [
    [681, 310],
    [688, 423],
    [484, 549],
    [550, 445],
    [526, 577],
    [374, 584],
    [373, 580],
    []
];
const columnCount = 19;

function cells(tag, getText) {
    let html = "";
    for (let i = 0; i < columnCount; i++) {
        html += "<" + tag + ">" + getText(i) + "</" + tag + ">";
    }
    return html;
}

function buildSheet() {
    const arrow = '<svg width="16" height="18" viewBox="0 0 16 18"><path d="M5 0h6v9h5l-8 9-8-9h5Z" fill="#444"/></svg>';

    let html = "<tr><th>" + arrow + "</th>" + cells("th", i => i < 18 ? "C" + (i + 1) : "") + "</tr>";
    html += "<tr><th></th>" + cells("th", i => columns[i] || "") + "</tr>";

    rows.forEach((row, n) => {
        const label = row.length ? n + 1 : "";
        html += "<tr><th>" + label + "</th>" + cells("td", i => row[i] || "") + "</tr>";
    });

    document.getElementById("sheet").innerHTML = html;
}

buildSheet();
```
